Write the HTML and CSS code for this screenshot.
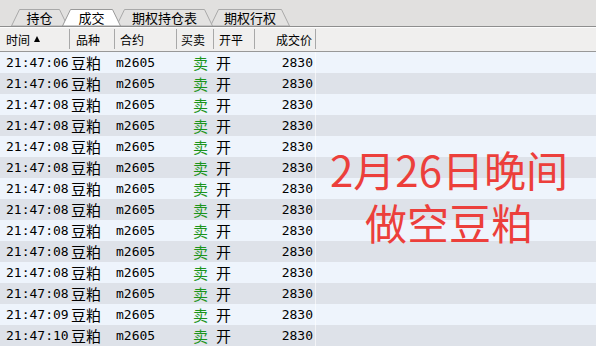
FILE: index.html
```html
<!DOCTYPE html>
<html lang="zh-CN">
<head>
    <meta charset="UTF-8">
    <meta name="viewport" content="width=device-width, initial-scale=1.0">
    <title>成交</title>
    <link rel="stylesheet" href="styles.css">
</head>
<body>
    <div class="panel">
        <div class="tabbar">
            <div class="tab tab-1">
                <svg width="57" height="17"><polygon points="0.5,17 8.5,0.5 48.5,0.5 56.5,17" /></svg>
                <span>持仓</span>
            </div>
            <div class="tab tab-2 active">
                <svg width="59" height="17"><polygon points="0.5,17 8.5,0.5 50.5,0.5 58.5,17" /></svg>
                <span>成交</span>
            </div>
            <div class="tab tab-3">
                <svg width="97" height="17"><polygon points="0.5,17 8.5,0.5 88.5,0.5 96.5,17" /></svg>
                <span>期权持仓表</span>
            </div>
            <div class="tab tab-4">
                <svg width="80" height="17"><polygon points="0.5,17 8.5,0.5 71.5,0.5 79.5,17" /></svg>
                <span>期权行权</span>
            </div>
        </div>

        <div class="head">
            <div class="hc c-time">时间 <i class="sort"></i></div>
            <div class="hc c-name">品种</div>
            <div class="hc c-code">合约</div>
            <div class="hc c-side">买卖</div>
            <div class="hc c-open">开平</div>
            <div class="hc c-price">成交价</div>
            <div class="hc c-rest"></div>
        </div>

        <div id="rows"></div>

        <div class="note">2月26日晚间<br>做空豆粕</div>
    </div>

    <script>
        const times = ['21:47:06', '21:47:06', '21:47:08', '21:47:08', '21:47:08', '21:47:08', '21:47:08',
            '21:47:08', '21:47:08', '21:47:08', '21:47:08', '21:47:08', '21:47:09', '21:47:10'];
        let rows = document.getElementById('rows');
        times.forEach((t, i) => {
            let row = document.createElement('div');
            row.className = 'row' + (i % 2 ? ' alt' : '');
            row.innerHTML =
                '<div class="dc c-time num">' + t + '</div>' +
                '<div class="dc c-name">豆粕</div>' +
                '<div class="dc c-code num">m2605</div>' +
                '<div class="dc c-side sell">卖</div>' +
                '<div class="dc c-open">开</div>' +
                '<div class="dc c-price num">2830</div>' +
                '<div class="dc c-rest"></div>';
            rows.appendChild(row);
        });
    </script>
</body>
</html>
```

FILE: styles.css
```css
body {
    margin: 0;
    font-family: "Noto Sans CJK SC", sans-serif;
    background-color: #eef4fc;
    color: #000;
}
.panel {
    position: relative;
    width: 596px;
    height: 346px;
    overflow: hidden;
}
.tabbar {
    display: flex;
    align-items: flex-end;
    height: 26px;
    padding-left: 11px;
    background-color: #e1e0df;
    border-bottom: 1px solid #8e8e8e;
    box-sizing: border-box;
    height: 27px;
    padding-bottom: 0;
}
.tab {
    position: relative;
    height: 17px;
    display: flex;
    justify-content: center;
    align-items: center;
    font-size: 13px;
    line-height: 17px;
    margin-bottom: 0;
}
.tab svg {
    position: absolute;
    left: 0;
    top: 0;
}
.tab polygon {
    fill: #e3e2e1;
    stroke: #a9a9a9;
    stroke-width: 1;
}
.tab span {
    position: relative;
}
.tab-1 { width: 57px; z-index: 1; }
.tab-2 { width: 59px; margin-left: -6px; z-index: 4; }
.tab-3 { width: 97px; margin-left: -5px; z-index: 3; }
.tab-4 { width: 80px; margin-left: -3px; z-index: 2; }
.tab.active polygon {
    fill: #ffffff;
    stroke: #9a9a9a;
}

.head, .row {
    display: grid;
    grid-template-columns: 70px 45px 62px 37px 41px 61px 1fr;
}
.head {
    height: 25px;
    box-sizing: border-box;
    background-color: #f0efee;
    border-top: 1px solid #fcfcfc;
    border-bottom: 1px solid #989898;
    font-size: 12px;
}
.hc {
    display: flex;
    align-items: center;
    border-right: 1px solid #a8a8a8;
    margin: 1px 0 2px;
    white-space: nowrap;
}
.hc.c-rest { border-right: none; }
.hc.c-time { padding-left: 6px; }
.hc.c-name { padding-left: 6px; }
.hc.c-code { padding-left: 5px; }
.hc.c-side { padding-left: 4px; }
.hc.c-open { padding-left: 5px; }
.hc.c-price { justify-content: flex-end; padding-right: 3px; }
.sort {
    display: inline-block;
    width: 0;
    height: 0;
    margin-left: 4px;
    border-left: 3.5px solid transparent;
    border-right: 3.5px solid transparent;
    border-bottom: 6px solid #000;
}

.row {
    height: 21px;
    background-color: #eef4fc;
    font-size: 15px;
}
.row.alt {
    background-color: #dee2e9;
}
.dc {
    display: flex;
    align-items: center;
    white-space: nowrap;
    line-height: 21px;
}
.num {
    font-family: "DejaVu Sans Mono", monospace;
    font-size: 13px;
}
.dc.c-time { padding-left: 6px; }
.dc.c-name { padding-left: 1px; }
.dc.c-code { padding-left: 1px; }
.dc.c-side { padding-left: 16px; }
.dc.c-open { padding-left: 2px; }
.dc.c-price {
    justify-content: flex-end;
    padding-right: 2px;
    border-right: 1px solid rgba(255, 255, 255, 0.6);
}
.sell {
    color: #1b941b;
}

.note {
    position: absolute;
    left: 299px;
    top: 142px;
    width: 300px;
    text-align: center;
    color: #ec3f3b;
    font-size: 42px;
    line-height: 53px;
}
```
